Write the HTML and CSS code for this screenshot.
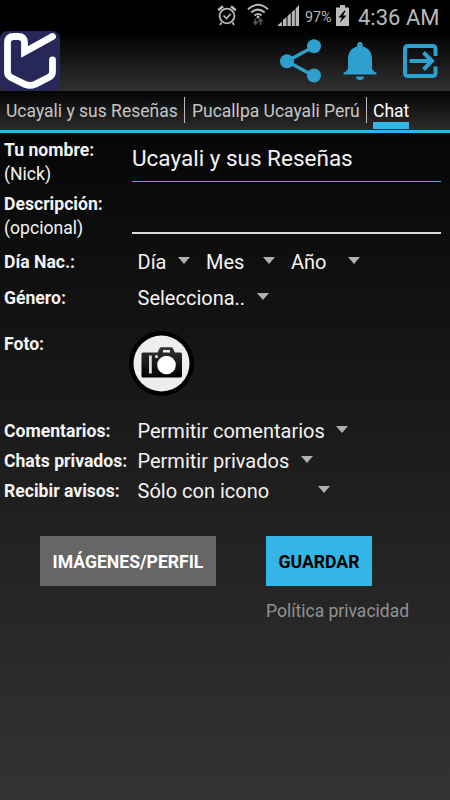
FILE: index.html
```html
<!DOCTYPE html>
<html lang="es">
<head>
    <meta charset="UTF-8">
    <meta name="viewport" content="width=device-width, initial-scale=1.0">
    <title>Ucayali y sus Reseñas</title>
    <link rel="stylesheet" href="styles.css">
</head>
<body>
    <div class="status-bar">
        <svg class="alarm" width="20" height="22" viewBox="0 0 20 22" fill="none" stroke="#b9b9b9">
            <circle cx="10" cy="12" r="7.4" stroke-width="1.8"/>
            <path d="M1.3 6.2L6 2.2M18.7 6.2L14 2.2" stroke-width="2.6"/>
            <path d="M6.5 11.5l3 3 4.3-4.8" stroke-width="1.7"/>
            <path d="M4.5 18.5L3 21M15.5 18.5L17 21" stroke-width="1.8"/>
        </svg>
        <svg class="wifi" width="22" height="24" viewBox="0 0 22 24" fill="none">
            <g stroke="#b9b9b9" stroke-width="2">
                <path d="M1 6.2Q11 -2.6 21 6.2"/>
                <path d="M4.3 9.5Q11 3.8 17.7 9.5"/>
                <path d="M7.4 12.5Q11 9.6 14.6 12.5"/>
            </g>
            <circle cx="11" cy="14" r="1.5" fill="#b9b9b9"/>
            <path d="M8.5 15.5v4M13.5 22v-4" stroke="#555" stroke-width="1.6"/>
            <path d="M5.5 18.500h6l-3 4zM10.500 18.500h6l-3-4z" fill="#555"/>
        </svg>
        <svg class="signal" width="21" height="21" viewBox="0 0 21 21" fill="#b9b9b9">
            <path d="M0 21v-1l4-3.500v4.500zM5 21v-6l3.500-3v9zM9.500 21V11l3.300-3v13zM13.800 21V7l3-2.500V21zM17.600 21V3.500L21 0V21z"/>
        </svg>
        <span class="percent">97%</span>
        <svg class="battery" width="13" height="21" viewBox="0 0 13 21">
            <path d="M4 0h5v2.500h4V21H0V2.500h4z" fill="#bdbdbd"/>
            <path d="M8.500 5.500L2.500 12.500h3.500L3.500 18l7-7.500H7L9.500 6z" fill="#000"/>
        </svg>
        <span class="clock">4:36 AM</span>
    </div>

    <div class="header">
        <svg class="logo" width="60" height="60" viewBox="0 0 60 60">
            <rect width="60" height="60" rx="8" fill="#272759"/>
            <path d="M52.500 5.500L24.500 21V12Q24.500 5.500 18 5.500H14Q7.500 5.500 7.500 12V41Q7.500 44.500 11 46.500L25 53.300Q30 55.500 35 53.300L48.500 46.500Q52.500 44.500 52.500 41V29" fill="none" stroke="#fff" stroke-width="6.800" stroke-linecap="round"/>
        </svg>
        <div class="actions">
            <svg width="42" height="44" viewBox="0 0 42 44" fill="#2da0ce">
                <path d="M34 7.500L7 22.300 34 37" fill="none" stroke="#2da0ce" stroke-width="3.400"/>
                <circle cx="34" cy="7.300" r="7"/>
                <circle cx="7" cy="22.300" r="7"/>
                <circle cx="34" cy="36.500" r="7"/>
            </svg>
            <svg class="bell" width="34" height="38" viewBox="0 0 34 38" fill="#2da0ce">
                <path d="M14.300 2.800a2.700 2.700 0 0 1 5.400 0v1.700C26 6 29 11 29 17v9q0 2.500 4.500 5v1.500H.5v-1.500Q5 28.500 5 26v-9C5 11 8 6 14.300 4.500z"/>
                <path d="M13 34.500h8a4 3.500 0 0 1-8 0z"/>
            </svg>
            <svg width="35" height="36" viewBox="0 0 35 36" fill="none" stroke="#2da0ce" stroke-width="4">
                <path d="M32.500 13V6Q32.500 3 29.500 3H5Q2 3 2 6V30Q2 33 5 33H29.500Q32.500 33 32.500 30V23.500"/>
                <path d="M6.500 18H28M20.500 9.500L29 18 20.500 26.500"/>
            </svg>
        </div>
    </div>

    <div class="tabs">
        <span class="tab tab-first">Ucayali y sus Reseñas</span>
        <span class="tab tab-second">Pucallpa Ucayali Perú</span>
        <span class="tab active">Chat</span>
    </div>

    <div class="form">
        <div class="row row-text">
            <div class="label"><b>Tu nombre:</b><br>(Nick)</div>
            <div class="field focused">Ucayali y sus Reseñas</div>
        </div>
        <div class="row row-text">
            <div class="label"><b>Descripción:</b><br>(opcional)</div>
            <div class="field"></div>
        </div>
        <div class="row row-select">
            <b class="label">Día Nac.:</b>
            <span class="select day">Día</span>
            <span class="select month">Mes</span>
            <span class="select year">Año</span>
        </div>
        <div class="row row-select">
            <b class="label">Género:</b>
            <span class="select gender">Selecciona..</span>
        </div>
        <div class="row row-photo">
            <b class="label">Foto:</b>
            <svg class="photo" width="66" height="66" viewBox="0 0 66 66">
                <defs>
                    <linearGradient id="body" x1="0" y1="0" x2="0" y2="1">
                        <stop offset="0" stop-color="#333"/>
                        <stop offset="1" stop-color="#000"/>
                    </linearGradient>
                </defs>
                <circle cx="32.500" cy="32.500" r="32.500" fill="#000"/>
                <circle cx="32.500" cy="32.500" r="28" fill="#eee"/>
                <path d="M14 21.500H28.500L30.500 17.500Q31 16.300 32.500 16.300H42Q43.500 16.300 44 17.500L46 21.500H51.500Q53 21.500 53 23V45Q53 46.500 51.500 46.500H14Q12.500 46.500 12.500 45V23Q12.500 21.500 14 21.500z" fill="url(#body)"/>
                <path d="M34 19h7v2.500h-7z" fill="#eee"/>
                <path d="M20 24.500h2.800v18H20z" fill="#ddd"/>
                <circle cx="27.500" cy="25.500" r="1.500" fill="#eee"/>
                <circle cx="37.500" cy="34" r="9.300" fill="#fff"/>
            </svg>
        </div>
        <div class="row row-option">
            <b class="label">Comentarios:</b>
            <span class="select comments">Permitir comentarios</span>
        </div>
        <div class="row row-option">
            <b class="label">Chats privados:</b>
            <span class="select private">Permitir privados</span>
        </div>
        <div class="row row-option">
            <b class="label">Recibir avisos:</b>
            <span class="select alerts">Sólo con icono</span>
        </div>
    </div>

    <div class="buttons">
        <button class="btn-images">IMÁGENES/PERFIL</button>
        <div class="save">
            <button class="btn-save">GUARDAR</button>
            <span class="privacy">Política privacidad</span>
        </div>
    </div>
</body>
</html>
```

FILE: styles.css
```css
* {
    box-sizing: border-box;
}
body {
    margin: 0;
    height: 800px;
    overflow: hidden;
    font-family: Roboto, sans-serif;
    color: #f3f3f3;
    background: linear-gradient(#000 0, #060606 133px, #1c1c1c 450px, #333 800px);
    white-space: nowrap;
}
svg {
    display: block;
    flex: none;
}
.status-bar {
    display: flex;
    height: 31px;
    padding-left: 217px;
    background: #000;
    color: #b9b9b9;
}
.alarm {
    margin-top: 4px;
}
.wifi {
    margin: 3px 0 0 10px;
}
.signal {
    margin: 5px 0 0 9px;
}
.percent {
    width: 27px;
    margin-left: 6px;
    font-size: 14.3px;
    line-height: 34px;
}
.battery {
    margin: 5px 0 0 4px;
}
.clock {
    margin-left: 9px;
    font-size: 22px;
    line-height: 35px;
}
.header {
    display: flex;
    justify-content: space-between;
    height: 60px;
    padding-right: 12px;
    background: linear-gradient(#000, #303030);
}
.actions {
    display: flex;
    align-items: center;
}
.bell {
    margin: 0 26px 0 21px;
}
.tabs {
    display: flex;
    height: 42px;
    padding: 6px 0 0 6px;
    border-bottom: 3px solid #33b5e5;
    background: linear-gradient(#050505, #2b2b2b);
    font-size: 17.5px;
    line-height: 28px;
    color: #c6c6c6;
}
.tab-first {
    width: 179px;
    height: 26px;
    border-right: 1px solid #bbb;
}
.tab-second {
    width: 182px;
    height: 26px;
    padding-left: 7px;
    border-right: 1px solid #bbb;
}
.active {
    width: 36px;
    height: 32px;
    margin-left: 6px;
    border-bottom: 7px solid #33b5e5;
    color: #fff;
}
.form {
    padding: 4px 9px 0 4px;
}
.row {
    display: flex;
}
.label {
    flex: none;
    width: 128px;
    font-size: 17.6px;
    line-height: 24px;
}
.row-text {
    height: 54px;
}
.row-text .label {
    padding-top: 1px;
}
.field {
    flex: 1;
    height: 43px;
    border-bottom: 2px solid #d9ddd9;
    font-size: 22.5px;
    line-height: 43px;
}
.focused {
    height: 45px;
    border-bottom: 1px solid #33b5e5;
}
.row-select {
    height: 36px;
    padding-top: 5px;
}
.select {
    display: flex;
    justify-content: space-between;
    align-items: center;
    height: 24px;
    margin-left: 5.5px;
    font-size: 20px;
}
.select::after {
    content: "";
    margin-top: -3px;
    border: 6.5px solid transparent;
    border-top: 7.5px solid #b0b0b0;
    border-bottom: 0;
}
.day {
    width: 52px;
}
.month {
    width: 69px;
    margin-left: 16.5px;
}
.year {
    width: 69px;
    margin-left: 16px;
}
.gender {
    width: 131px;
}
.row-photo {
    height: 102px;
    padding-top: 15px;
}
.photo {
    margin: -1px 0 0 -3px;
}
.row-option {
    height: 30px;
}
.comments {
    width: 210px;
}
.private {
    width: 175px;
}
.alerts {
    width: 192px;
}
.buttons {
    display: flex;
    gap: 50px;
    padding: 27px 0 0 40px;
}
button {
    height: 50px;
    padding: 2px 0 0;
    border: none;
    font-family: inherit;
    font-size: 17.6px;
    font-weight: bold;
}
.btn-images {
    width: 176px;
    background-color: #666;
    color: #fff;
}
.save {
    display: flex;
    flex-direction: column;
}
.btn-save {
    width: 106px;
    background-color: #33b5e5;
    color: #000;
}
.privacy {
    margin-top: 13px;
    font-size: 17.5px;
    line-height: 24px;
    color: #929292;
}
```
